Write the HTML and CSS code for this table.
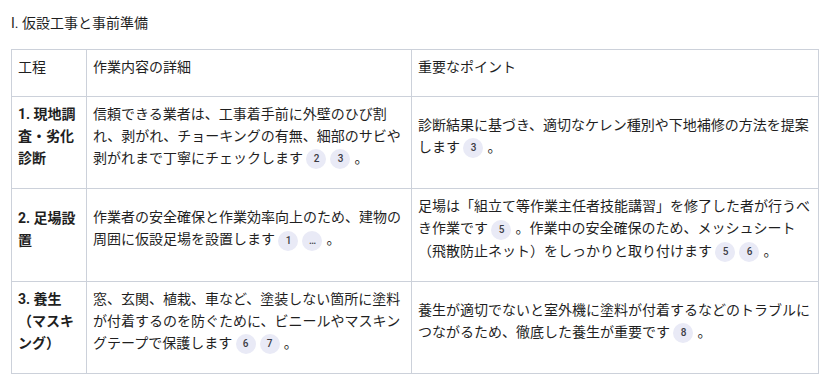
FILE: index.html
```html
<!DOCTYPE html>
<html lang="ja">
<head>
<meta charset="utf-8">
<link rel="stylesheet" href="styles.css">
</head>
<body>
<div class="page">
  <h3 class="title">I. 仮設工事と事前準備</h3>
  <table class="plan">
    <thead>
      <tr>
        <th class="c1"><p>工程</p></th>
        <th class="c2"><p>作業内容の詳細</p></th>
        <th class="c3"><p>重要なポイント</p></th>
      </tr>
    </thead>
    <tbody>
      <tr>
        <td class="step"><p>1. 現地調査・劣化診断</p></td>
        <td><p>信頼できる業者は、工事着手前に外壁のひび割れ、剥がれ、チョーキングの有無、細部のサビや剥がれまで丁寧にチェックします <span class="cite">2</span><span class="cite">3</span>。</p></td>
        <td><p>診断結果に基づき、適切なケレン種別や下地補修の方法を提案します <span class="cite">3</span>。</p></td>
      </tr>
      <tr>
        <td class="step"><p>2. 足場設置</p></td>
        <td><p>作業者の安全確保と作業効率向上のため、建物の周囲に仮設足場を設置します <span class="cite">1</span><span class="cite">…</span>。</p></td>
        <td><p>足場は「組立て等作業主任者技能講習」を修了した者が行うべき作業です <span class="cite">5</span>。作業中の安全確保のため、メッシュシート（飛散防止ネット）をしっかりと取り付けます <span class="cite">5</span><span class="cite">6</span>。</p></td>
      </tr>
      <tr>
        <td class="step"><p>3. 養生（マスキング）</p></td>
        <td><p>窓、玄関、植栽、車など、塗装しない箇所に塗料が付着するのを防ぐために、ビニールやマスキングテープで保護します <span class="cite">6</span><span class="cite">7</span>。</p></td>
        <td><p>養生が適切でないと室外機に塗料が付着するなどのトラブルにつながるため、徹底した養生が重要です <span class="cite">8</span>。</p></td>
      </tr>
    </tbody>
  </table>
</div>
</body>
</html>
```

FILE: styles.css
```css
html, body {
  margin: 0;
  padding: 0;
  background: #ffffff;
}

body {
  font-family: Roboto, "Noto Sans CJK JP", sans-serif;
  font-size: 14px;
  line-height: 22px;
  color: #1f1f1f;
}

.page {
  padding: 0 5px 0 11px;
}

.title {
  margin: 12px 0 15px;
  font-size: 14px;
  font-weight: normal;
  line-height: 22px;
}

.plan {
  width: 808px;
  border-collapse: collapse;
  table-layout: fixed;
}

.plan th,
.plan td {
  border: 1px solid #ccd1da;
  padding: 6px 6px;
  text-align: left;
  font-weight: normal;
  vertical-align: middle;
}

.plan .c1 { width: 62px; }
.plan .c2 { width: 312px; }

.plan p {
  margin: 0 0 12px;
}

.plan tbody p {
  margin-bottom: 13px;
}

.plan td.step {
  font-weight: bold;
}

.cite {
  display: inline-block;
  width: 20px;
  height: 20px;
  margin-right: 4px;
  border-radius: 50%;
  background: #e9eaf6;
  color: #3c3c44;
  font-size: 10px;
  font-weight: 500;
  line-height: 20px;
  text-align: center;
  vertical-align: middle;
}
```
